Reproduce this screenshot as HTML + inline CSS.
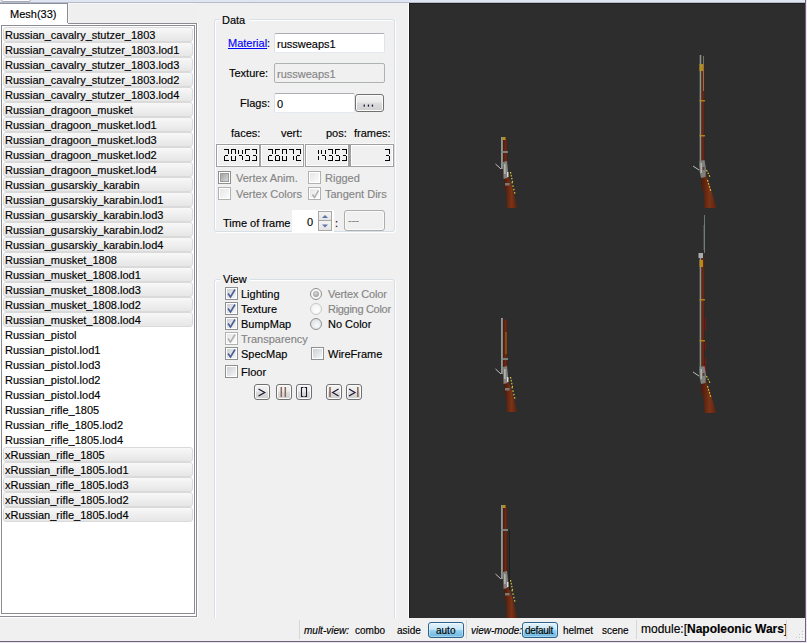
<!DOCTYPE html>
<html><head><meta charset="utf-8">
<style>
*{box-sizing:border-box;margin:0;padding:0}
html,body{width:807px;height:643px;overflow:hidden;background:#f0f0f0}
body{position:relative;font-family:"Liberation Sans",sans-serif;font-size:11px;color:#000;-webkit-text-stroke:0.15px}
.a{position:absolute}
.t{position:absolute;white-space:nowrap;line-height:15px;font-size:11px}
.it{position:absolute;left:3px;width:190px;height:15px;border:1px solid #dadada;border-radius:3px;background:linear-gradient(#f8f8f8,#e6e6e6)}
.lt{position:absolute;left:5px;white-space:nowrap;line-height:15px}
.gb{position:absolute;border:1px solid #d5dfe5;border-radius:3px;box-shadow:inset 1px 1px 0 #fff, 1px 1px 0 #fff}
.tb{position:absolute;background:#fff;border:1px solid #abadb3;border-color:#abadb3 #e2e3ea #e3e9ef #dbdfe6;border-radius:2px}
.lcd{position:absolute;top:144px;height:23px;border:1px solid #a0a0a0;box-shadow:inset 1px 1px 0 #fff,inset -1px -1px 0 #fff;background:#f0f0f0}
.cb{position:absolute;width:13px;height:13px;border:1px solid #8e8f8f;background:#fff}
.cb::after{content:"";position:absolute;left:1px;top:1px;width:9px;height:9px;background:linear-gradient(135deg,#cbcfd5,#f6f6f6)}
.cb.d{border-color:#b1b1b1}
.cb.d::after{background:linear-gradient(135deg,#e6e6e6,#fbfbfb)}
.ck svg{position:absolute;left:1px;top:1px;z-index:2}
.rb{position:absolute;width:12px;height:12px;border-radius:50%;border:1px solid #8e8f8f;background:radial-gradient(circle at 60% 65%,#f8f9fb,#d4d8de)}
.rb.d{border-color:#c8c8c8;background:radial-gradient(circle at 60% 65%,#fff,#ececec)}
.gray{color:#858585}
.pb{position:absolute;top:384px;width:16px;height:16px;border:1px solid #707070;border-radius:3px;background:linear-gradient(#f2f2f2 0,#ebebeb 45%,#dddddd 50%,#cfcfcf 100%);box-shadow:inset 0 0 0 1px #fcfcfc}
.sb{position:absolute;top:622px;height:16px;border:1px solid #2c628b;border-radius:3px;background:linear-gradient(#e5f4fc 0,#c4e5f6 48%,#98d1ef 52%,#6db6df 100%);box-shadow:inset 0 0 0 1px rgba(255,255,255,.35)}
.sep{position:absolute;top:620px;width:1px;height:19px;background:#d7d7d7}
</style></head><body>

<!-- top strip -->
<div class="a" style="left:0;top:0;width:807px;height:3px;background:linear-gradient(#dde3f1 0,#e1e7f5 66%,#b5bbc8 66%)"></div>
<div class="a" style="left:1px;top:-2px;width:30px;height:4px;background:#fbfbfd;border:1px solid #a8acb8;border-radius:2px"></div>
<div class="a" style="left:0;top:3px;width:68px;height:1px;background:#8a8f9b"></div>
<div class="a" style="left:805px;top:0;width:1px;height:642px;background:#6c6478"></div>
<div class="a" style="left:806px;top:0;width:1px;height:643px;background:#ede6f2"></div>
<div class="a" style="left:0;top:641px;width:806px;height:1px;background:#6c6478"></div>
<div class="a" style="left:0;top:642px;width:807px;height:1px;background:#e8e2f0"></div>

<!-- tab -->
<div class="a" style="left:0;top:4px;width:67px;height:20px;background:#fff"></div>
<div class="a" style="left:67px;top:4px;width:1px;height:20px;background:#898c95"></div>
<div class="a" style="left:68px;top:23px;width:129px;height:1px;background:#898c95"></div>
<div class="a" style="left:68px;top:3px;width:129px;height:20px;background:#efefef;box-shadow:inset 1px 1px 0 #f6f6f4"></div>
<div class="t" style="left:10px;top:7px">Mesh(33)</div>
<!-- pane -->
<div class="a" style="left:-1px;top:23px;width:198px;height:594px;border:1px solid #898c95;border-top:none;background:#fff"></div>
<div class="a" style="left:68px;top:23px;width:129px;height:1px;background:#898c95"></div>
<div class="a" style="left:197px;top:23px;width:1px;height:595px;background:#fff"></div>
<div class="a" style="left:0;top:617px;width:198px;height:1px;background:#fff"></div>
<!-- listbox -->
<div class="a" style="left:1px;top:25px;width:194px;height:589px;border:1px solid #898c95;background:#fff"></div>

<div class="it" style="top:27px"></div>
<div class="lt" style="top:28px">Russian_cavalry_stutzer_1803</div>
<div class="it" style="top:42px"></div>
<div class="lt" style="top:43px">Russian_cavalry_stutzer_1803.lod1</div>
<div class="it" style="top:57px"></div>
<div class="lt" style="top:58px">Russian_cavalry_stutzer_1803.lod3</div>
<div class="it" style="top:72px"></div>
<div class="lt" style="top:73px">Russian_cavalry_stutzer_1803.lod2</div>
<div class="it" style="top:87px"></div>
<div class="lt" style="top:88px">Russian_cavalry_stutzer_1803.lod4</div>
<div class="it" style="top:102px"></div>
<div class="lt" style="top:103px">Russian_dragoon_musket</div>
<div class="it" style="top:117px"></div>
<div class="lt" style="top:118px">Russian_dragoon_musket.lod1</div>
<div class="it" style="top:132px"></div>
<div class="lt" style="top:133px">Russian_dragoon_musket.lod3</div>
<div class="it" style="top:147px"></div>
<div class="lt" style="top:148px">Russian_dragoon_musket.lod2</div>
<div class="it" style="top:162px"></div>
<div class="lt" style="top:163px">Russian_dragoon_musket.lod4</div>
<div class="it" style="top:177px"></div>
<div class="lt" style="top:178px">Russian_gusarskiy_karabin</div>
<div class="it" style="top:192px"></div>
<div class="lt" style="top:193px">Russian_gusarskiy_karabin.lod1</div>
<div class="it" style="top:207px"></div>
<div class="lt" style="top:208px">Russian_gusarskiy_karabin.lod3</div>
<div class="it" style="top:222px"></div>
<div class="lt" style="top:223px">Russian_gusarskiy_karabin.lod2</div>
<div class="it" style="top:237px"></div>
<div class="lt" style="top:238px">Russian_gusarskiy_karabin.lod4</div>
<div class="it" style="top:252px"></div>
<div class="lt" style="top:253px">Russian_musket_1808</div>
<div class="it" style="top:267px"></div>
<div class="lt" style="top:268px">Russian_musket_1808.lod1</div>
<div class="it" style="top:282px"></div>
<div class="lt" style="top:283px">Russian_musket_1808.lod3</div>
<div class="it" style="top:297px"></div>
<div class="lt" style="top:298px">Russian_musket_1808.lod2</div>
<div class="it" style="top:312px"></div>
<div class="lt" style="top:313px">Russian_musket_1808.lod4</div>
<div class="lt" style="top:328px">Russian_pistol</div>
<div class="lt" style="top:343px">Russian_pistol.lod1</div>
<div class="lt" style="top:358px">Russian_pistol.lod3</div>
<div class="lt" style="top:373px">Russian_pistol.lod2</div>
<div class="lt" style="top:388px">Russian_pistol.lod4</div>
<div class="lt" style="top:403px">Russian_rifle_1805</div>
<div class="lt" style="top:418px">Russian_rifle_1805.lod2</div>
<div class="lt" style="top:433px">Russian_rifle_1805.lod4</div>
<div class="it" style="top:447px"></div>
<div class="lt" style="top:448px">xRussian_rifle_1805</div>
<div class="it" style="top:462px"></div>
<div class="lt" style="top:463px">xRussian_rifle_1805.lod1</div>
<div class="it" style="top:477px"></div>
<div class="lt" style="top:478px">xRussian_rifle_1805.lod3</div>
<div class="it" style="top:492px"></div>
<div class="lt" style="top:493px">xRussian_rifle_1805.lod2</div>
<div class="it" style="top:507px"></div>
<div class="lt" style="top:508px">xRussian_rifle_1805.lod4</div>

<!-- right panel group boxes -->
<div class="gb" style="left:214px;top:19px;width:181px;height:213px"></div>
<div class="a" style="left:220px;top:14px;width:30px;height:12px;background:#f0f0f0"></div>
<div class="t" style="left:222px;top:13px">Data</div>

<div class="t" style="left:228px;top:36px;color:#0000ff;text-decoration:underline">Material</div>
<div class="t" style="left:267px;top:36px">:</div>
<div class="tb" style="left:274px;top:33px;width:111px;height:20px"></div>
<div class="t" style="left:277px;top:37px">russweaps1</div>

<div class="t" style="left:229px;top:66px">Texture:</div>
<div class="tb" style="left:274px;top:63px;width:111px;height:20px;background:#f0f0f0;border-color:#adb2b5"></div>
<div class="t gray" style="left:277px;top:67px">russweaps1</div>

<div class="t" style="left:240px;top:96px">Flags:</div>
<div class="tb" style="left:274px;top:93px;width:81px;height:20px"></div>
<div class="t" style="left:277px;top:97px">0</div>
<div class="pb" style="left:355px;top:94px;width:29px;height:18px"></div>
<svg class="a" style="left:362px;top:104px" width="14" height="4"><rect x="1.6" y="0.6" width="1.3" height="2" fill="#101030"/><rect x="5.8" y="0.6" width="1.3" height="2" fill="#101030"/><rect x="9.8" y="0.6" width="1.3" height="2" fill="#101030"/></svg>

<div class="t" style="left:231px;top:126px">faces:</div>
<div class="t" style="left:281px;top:126px">vert:</div>
<div class="t" style="left:326px;top:126px">pos:</div>
<div class="t" style="left:354px;top:126px">frames:</div>

<div class="a" style="left:216px;top:143px;width:178px;height:1px;background:#f8f8f8"></div>
<div class="lcd" style="left:216px;width:44px"></div>
<div class="lcd" style="left:260px;width:44px"></div>
<div class="lcd" style="left:305px;width:44px"></div>
<div class="lcd" style="left:349px;width:45px;border-left-width:2px"></div>
<svg class="a" style="left:0;top:0" width="807" height="643" id="lcdsvg"><rect x="224" y="149" width="5" height="1" fill="#000"/><rect x="228" y="150" width="1" height="4" fill="#000"/><rect x="224" y="160" width="5" height="1" fill="#000"/><rect x="224" y="156" width="1" height="4" fill="#000"/><rect x="225" y="155" width="3" height="1" fill="#000"/><rect x="231" y="149" width="5" height="1" fill="#000"/><rect x="235" y="150" width="1" height="4" fill="#000"/><rect x="235" y="156" width="1" height="4" fill="#000"/><rect x="231" y="160" width="5" height="1" fill="#000"/><rect x="231" y="156" width="1" height="4" fill="#000"/><rect x="231" y="150" width="1" height="4" fill="#000"/><rect x="242" y="150" width="1" height="4" fill="#000"/><rect x="242" y="156" width="1" height="4" fill="#000"/><rect x="238" y="150" width="1" height="4" fill="#000"/><rect x="239" y="155" width="3" height="1" fill="#000"/><rect x="245" y="149" width="5" height="1" fill="#000"/><rect x="249" y="156" width="1" height="4" fill="#000"/><rect x="245" y="160" width="5" height="1" fill="#000"/><rect x="245" y="150" width="1" height="4" fill="#000"/><rect x="246" y="155" width="3" height="1" fill="#000"/><rect x="252" y="149" width="5" height="1" fill="#000"/><rect x="256" y="150" width="1" height="4" fill="#000"/><rect x="256" y="156" width="1" height="4" fill="#000"/><rect x="252" y="160" width="5" height="1" fill="#000"/><rect x="253" y="155" width="3" height="1" fill="#000"/><rect x="268" y="149" width="5" height="1" fill="#000"/><rect x="272" y="150" width="1" height="4" fill="#000"/><rect x="268" y="160" width="5" height="1" fill="#000"/><rect x="268" y="156" width="1" height="4" fill="#000"/><rect x="269" y="155" width="3" height="1" fill="#000"/><rect x="275" y="149" width="5" height="1" fill="#000"/><rect x="279" y="156" width="1" height="4" fill="#000"/><rect x="275" y="160" width="5" height="1" fill="#000"/><rect x="275" y="156" width="1" height="4" fill="#000"/><rect x="275" y="150" width="1" height="4" fill="#000"/><rect x="276" y="155" width="3" height="1" fill="#000"/><rect x="282" y="149" width="5" height="1" fill="#000"/><rect x="286" y="150" width="1" height="4" fill="#000"/><rect x="286" y="156" width="1" height="4" fill="#000"/><rect x="282" y="160" width="5" height="1" fill="#000"/><rect x="282" y="156" width="1" height="4" fill="#000"/><rect x="282" y="150" width="1" height="4" fill="#000"/><rect x="289" y="149" width="5" height="1" fill="#000"/><rect x="293" y="150" width="1" height="4" fill="#000"/><rect x="293" y="156" width="1" height="4" fill="#000"/><rect x="296" y="149" width="5" height="1" fill="#000"/><rect x="300" y="150" width="1" height="4" fill="#000"/><rect x="296" y="160" width="5" height="1" fill="#000"/><rect x="296" y="156" width="1" height="4" fill="#000"/><rect x="297" y="155" width="3" height="1" fill="#000"/><rect x="318" y="150" width="1" height="4" fill="#000"/><rect x="318" y="156" width="1" height="4" fill="#000"/><rect x="325" y="150" width="1" height="4" fill="#000"/><rect x="325" y="156" width="1" height="4" fill="#000"/><rect x="321" y="150" width="1" height="4" fill="#000"/><rect x="322" y="155" width="3" height="1" fill="#000"/><rect x="328" y="149" width="5" height="1" fill="#000"/><rect x="332" y="150" width="1" height="4" fill="#000"/><rect x="332" y="156" width="1" height="4" fill="#000"/><rect x="328" y="160" width="5" height="1" fill="#000"/><rect x="329" y="155" width="3" height="1" fill="#000"/><rect x="335" y="149" width="5" height="1" fill="#000"/><rect x="339" y="156" width="1" height="4" fill="#000"/><rect x="335" y="160" width="5" height="1" fill="#000"/><rect x="335" y="150" width="1" height="4" fill="#000"/><rect x="336" y="155" width="3" height="1" fill="#000"/><rect x="342" y="149" width="5" height="1" fill="#000"/><rect x="346" y="150" width="1" height="4" fill="#000"/><rect x="346" y="156" width="1" height="4" fill="#000"/><rect x="342" y="160" width="5" height="1" fill="#000"/><rect x="343" y="155" width="3" height="1" fill="#000"/><rect x="385" y="149" width="5" height="1" fill="#000"/><rect x="389" y="150" width="1" height="4" fill="#000"/><rect x="389" y="156" width="1" height="4" fill="#000"/><rect x="385" y="160" width="5" height="1" fill="#000"/><rect x="386" y="155" width="3" height="1" fill="#000"/></svg>

<!-- data checkboxes -->
<div class="cb d" style="left:218px;top:171px;border-color:#8e8f8f"></div>
<div class="a" style="left:220px;top:173px;width:9px;height:9px;border:1px solid #9c9c9c;background:linear-gradient(135deg,#a4a4a4,#d6d6d6)"></div>
<div class="t gray" style="left:236px;top:171px">Vertex Anim.</div>
<div class="cb d" style="left:218px;top:187px"></div>
<div class="t gray" style="left:236px;top:187px">Vertex Colors</div>
<div class="cb d" style="left:308px;top:171px"></div>
<div class="t gray" style="left:325px;top:171px">Rigged</div>
<div class="cb d ck" style="left:308px;top:187px"><svg width="11" height="11"><path d="M2.5 5.5 L4.5 8.5 L8.5 1.5" fill="none" stroke="#a9a9a9" stroke-width="1.4"/></svg></div>
<div class="t gray" style="left:325px;top:187px">Tangent Dirs</div>

<div class="t" style="left:223px;top:216px">Time of frame</div>
<div class="a" style="left:292px;top:210px;width:42px;height:22px;background:#fff"></div>
<div class="t" style="left:307px;top:215px">0</div>
<div class="a" style="left:318px;top:211px;width:14px;height:10px;border:1px solid #a7a7a7;background:linear-gradient(#f4f4f4,#e4e4e4)"></div>
<div class="a" style="left:318px;top:220px;width:14px;height:11px;border:1px solid #a7a7a7;background:linear-gradient(#f4f4f4,#e4e4e4)"></div>
<svg class="a" style="left:318px;top:211px" width="14" height="20"><path d="M4 7 L7 4 L10 7Z" fill="#5d74a6"/><path d="M4 13.5 L7 16.5 L10 13.5Z" fill="#5d74a6"/></svg>
<div class="t" style="left:335px;top:216px">:</div>
<div class="a" style="left:344px;top:210px;width:41px;height:21px;border:1px solid #adadad;border-radius:3px;background:#f0f0f0;box-shadow:inset 0 0 0 1px #fafafa"></div>
<div class="t gray" style="left:348px;top:213px">---</div>

<!-- View group -->
<div class="gb" style="left:214px;top:279px;width:181px;height:360px"></div>
<div class="a" style="left:220px;top:274px;width:30px;height:12px;background:#f0f0f0"></div>
<div class="t" style="left:223px;top:272px">View</div>

<div class="cb" style="left:225px;top:287px"><svg width="11" height="11" style="position:absolute;left:0;top:0;z-index:3"><path d="M2 5.5 L4.5 9 L9 1.5" fill="none" stroke="#4a5f97" stroke-width="1.6"/></svg></div>
<div class="t" style="left:241px;top:287px">Lighting</div>
<div class="cb" style="left:225px;top:302px"><svg width="11" height="11" style="position:absolute;left:0;top:0;z-index:3"><path d="M2 5.5 L4.5 9 L9 1.5" fill="none" stroke="#4a5f97" stroke-width="1.6"/></svg></div>
<div class="t" style="left:241px;top:302px">Texture</div>
<div class="cb" style="left:225px;top:317px"><svg width="11" height="11" style="position:absolute;left:0;top:0;z-index:3"><path d="M2 5.5 L4.5 9 L9 1.5" fill="none" stroke="#4a5f97" stroke-width="1.6"/></svg></div>
<div class="t" style="left:241px;top:317px">BumpMap</div>
<div class="cb d" style="left:225px;top:332px"><svg width="11" height="11" style="position:absolute;left:0;top:0;z-index:3"><path d="M2 5.5 L4.5 9 L9 1.5" fill="none" stroke="#b0b0b0" stroke-width="1.6"/></svg></div>
<div class="t gray" style="left:241px;top:332px">Transparency</div>
<div class="cb" style="left:225px;top:347px"><svg width="11" height="11" style="position:absolute;left:0;top:0;z-index:3"><path d="M2 5.5 L4.5 9 L9 1.5" fill="none" stroke="#4a5f97" stroke-width="1.6"/></svg></div>
<div class="t" style="left:241px;top:347px">SpecMap</div>
<div class="cb" style="left:225px;top:365px"></div>
<div class="t" style="left:241px;top:365px">Floor</div>
<div class="cb" style="left:311px;top:347px"></div>
<div class="t" style="left:328px;top:347px">WireFrame</div>
<div class="rb" style="left:310px;top:288px;background:#f6f6f6"><div style="position:absolute;left:2px;top:2px;width:6px;height:6px;border-radius:50%;background:radial-gradient(circle at 45% 40%,#d8d8d8,#8a8a8a)"></div></div>
<div class="t gray" style="left:328px;top:287px;letter-spacing:-0.15px">Vertex Color</div>
<div class="rb d" style="left:310px;top:303px"></div>
<div class="t gray" style="left:328px;top:302px;letter-spacing:-0.3px">Rigging Color</div>
<div class="rb" style="left:310px;top:318px"></div>
<div class="t" style="left:328px;top:317px;letter-spacing:0px">No Color</div>
<div class="pb" style="left:254px"></div>
<div class="pb" style="left:276px"></div>
<div class="pb" style="left:296px"></div>
<div class="pb" style="left:326px"></div>
<div class="pb" style="left:346px"></div>
<svg class="a" style="left:0;top:0;z-index:4" width="807" height="643" fill="none" stroke-width="1.1"><polyline points="258.5,389 264.8,392.5 258.5,396" stroke="#1a1030"/><line x1="281.3" y1="387" x2="281.3" y2="397" stroke="#8a6a58" stroke-width="1.5"/><line x1="285.3" y1="387" x2="285.3" y2="397" stroke="#8a6a58" stroke-width="1.5"/><path d="M303.5 387.5 H301.5 V396.5 H303.5 M304.5 387.5 H306.5 V396.5 H304.5" stroke="#1a1a2a"/><line x1="330" y1="387" x2="330" y2="397" stroke="#8a6a58" stroke-width="1.6"/><polyline points="338.6,389 332.6,392.5 338.6,396" stroke="#1a1030"/><polyline points="349,389 355,392.5 349,396" stroke="#1a1030"/><line x1="357.8" y1="387" x2="357.8" y2="397" stroke="#8a6a58" stroke-width="1.6"/></svg>

<!-- viewport -->
<div class="a" style="left:408px;top:3px;width:1px;height:615px;background:#fff"></div>
<div class="a" style="left:409px;top:3px;width:396px;height:615px;background:#2d2d2d;box-shadow:inset 1px 1px 0 #1e1e1c"></div>
<svg class="a" style="left:409px;top:4px" width="396" height="614" id="rifles"><g transform="translate(-409,-4)"><defs><linearGradient id="st" x1="0" y1="0" x2="1" y2="0"><stop offset="0" stop-color="#4e1a0a"/><stop offset="0.55" stop-color="#7a3418"/><stop offset="1" stop-color="#5a2010"/></linearGradient>
<linearGradient id="fe" x1="0" y1="0" x2="1" y2="0"><stop offset="0" stop-color="#4a160a"/><stop offset="0.6" stop-color="#6e2a14"/><stop offset="1" stop-color="#50190b"/></linearGradient></defs><polygon points="700.8,66 704.3,66 704.6,179 700.8,179" fill="url(#fe)" opacity="1"/><rect x="699.8" y="55" width="1.5" height="112" fill="#7b8784" opacity="1"/><rect x="699.8" y="55" width="0.7" height="112" fill="#a9b4b1" opacity="0.6"/><rect x="699.5" y="100" width="5.5" height="1.5" fill="#b8901c" opacity="0.85"/><rect x="699.5" y="135" width="5.5" height="1.5" fill="#b8901c" opacity="0.85"/><rect x="699.5" y="64" width="3.5" height="7" fill="#b8901c" opacity="0.95"/><polygon points="701.2,178 705.5,173 710,186 716.5,208 704.5,208 704,194 701.5,186" fill="url(#st)" opacity="1"/><polygon points="699.5,161 704.5,160 706,169 705.5,177 701,178 699.5,171" fill="#858b88" opacity="0.9"/><rect x="700.5" y="163" width="1.5" height="10" fill="#b8c0bd" opacity="0.8"/><rect x="702.5" y="167" width="2" height="3" fill="#5a3020" opacity="0.8"/><line x1="693" y1="166" x2="699" y2="170" stroke="#cfcfcf" stroke-width="0.9" opacity="1"/><line x1="706.5" y1="170" x2="710" y2="177" stroke="#e8c832" stroke-width="1.1" opacity="1" stroke-dasharray="1.6 1.4"/><line x1="707.5" y1="180" x2="711" y2="192" stroke="#e8c832" stroke-width="1.1" opacity="1" stroke-dasharray="1.6 1.6"/><line x1="703.5" y1="56" x2="703.5" y2="91" stroke="#a09468" stroke-width="0.7" opacity="1"/><line x1="704.5" y1="215" x2="704.5" y2="253" stroke="#6a7670" stroke-width="1" opacity="1"/><line x1="703.9" y1="225" x2="703.9" y2="250" stroke="#a8b098" stroke-width="0.6" opacity="0.6"/><rect x="698.5" y="253" width="4.5" height="5" fill="#a8acaa" opacity="1"/><polygon points="700.8,258 704.3,258 704.6,385 700.8,385" fill="url(#fe)" opacity="1"/><rect x="699.8" y="258" width="1.5" height="115" fill="#7b8784" opacity="1"/><rect x="699.8" y="258" width="0.7" height="115" fill="#a9b4b1" opacity="0.6"/><rect x="699.5" y="299" width="5.5" height="1.5" fill="#b8901c" opacity="0.85"/><rect x="699.5" y="340" width="5.5" height="1.5" fill="#b8901c" opacity="0.85"/><rect x="699.5" y="260" width="3.5" height="7" fill="#b8901c" opacity="0.95"/><rect x="705" y="318" width="0.9" height="12" fill="#8c1414" opacity="1"/><rect x="705" y="342" width="0.9" height="8" fill="#8c1414" opacity="1"/><rect x="705" y="358" width="0.9" height="14" fill="#8c1414" opacity="1"/><polygon points="701.2,384 705.5,379 710,392 716.5,413 704.5,413 704,400 701.5,392" fill="url(#st)" opacity="1"/><polygon points="699.5,367 704.5,366 706,375 705.5,383 701,384 699.5,377" fill="#858b88" opacity="0.9"/><rect x="700.5" y="369" width="1.5" height="10" fill="#b8c0bd" opacity="0.8"/><rect x="702.5" y="373" width="2" height="3" fill="#5a3020" opacity="0.8"/><line x1="693" y1="372" x2="699" y2="376" stroke="#cfcfcf" stroke-width="0.9" opacity="1"/><line x1="706.5" y1="376" x2="710" y2="383" stroke="#e8c832" stroke-width="1.1" opacity="1" stroke-dasharray="1.6 1.4"/><line x1="707.5" y1="386" x2="711" y2="398" stroke="#e8c832" stroke-width="1.1" opacity="1" stroke-dasharray="1.6 1.6"/><polygon points="502.8,138 507,139 507.5,179 503,179" fill="url(#fe)" opacity="1"/><rect x="501.2" y="137" width="1.8" height="32" fill="#7b8784" opacity="1"/><rect x="501.2" y="137" width="0.9" height="32" fill="#a9b4b1" opacity="0.7"/><rect x="502.5" y="137" width="3" height="3" fill="#b8901c" opacity="1"/><rect x="501" y="151" width="7" height="2" fill="#7f8a88" opacity="0.9"/><polygon points="504.5,179 508.5,176 512.5,188 517,208 507,208 506.5,194 504.5,186" fill="url(#st)" opacity="1"/><polygon points="503,162 507,161 508,170 507.5,178 503.5,179" fill="#858b88" opacity="0.9"/><rect x="504" y="164" width="1.6" height="10" fill="#b8c0bd" opacity="0.8"/><line x1="495.5" y1="164" x2="501" y2="169" stroke="#cfcfcf" stroke-width="0.9" opacity="1"/><rect x="507" y="172" width="1.5" height="5" fill="#e8e8e8" opacity="0.9"/><line x1="510.5" y1="172" x2="512.5" y2="182" stroke="#e8c832" stroke-width="1.1" opacity="1" stroke-dasharray="1.6 1.4"/><line x1="512" y1="182" x2="515" y2="194" stroke="#e8c832" stroke-width="1.2" opacity="1" stroke-dasharray="1.5 2"/><rect x="505" y="183" width="4.5" height="2.5" fill="#7f8a88" opacity="0.85"/><polygon points="502.8,319 507,320 507.5,384 503,384" fill="url(#fe)" opacity="1"/><rect x="501.2" y="318" width="1.8" height="56" fill="#7b8784" opacity="1"/><rect x="501.2" y="318" width="0.9" height="56" fill="#a9b4b1" opacity="0.7"/><rect x="501" y="358" width="7" height="2" fill="#7f8a88" opacity="0.9"/><polygon points="504.5,384 508.5,381 512.5,393 517,412 507,412 506.5,399 504.5,391" fill="url(#st)" opacity="1"/><polygon points="503,367 507,366 508,375 507.5,383 503.5,384" fill="#858b88" opacity="0.9"/><rect x="504" y="369" width="1.6" height="10" fill="#b8c0bd" opacity="0.8"/><line x1="495.5" y1="369" x2="501" y2="374" stroke="#cfcfcf" stroke-width="0.9" opacity="1"/><rect x="507" y="377" width="1.5" height="5" fill="#e8e8e8" opacity="0.9"/><line x1="510.5" y1="377" x2="512.5" y2="387" stroke="#e8c832" stroke-width="1.1" opacity="1" stroke-dasharray="1.6 1.4"/><line x1="512" y1="387" x2="515" y2="399" stroke="#e8c832" stroke-width="1.2" opacity="1" stroke-dasharray="1.5 2"/><rect x="505" y="388" width="4.5" height="2.5" fill="#7f8a88" opacity="0.85"/><polygon points="502.8,506 507,507 507.5,589 503,589" fill="url(#fe)" opacity="1"/><rect x="501.2" y="505" width="1.8" height="74" fill="#7b8784" opacity="1"/><rect x="501.2" y="505" width="0.9" height="74" fill="#a9b4b1" opacity="0.7"/><rect x="502.5" y="505" width="3" height="3" fill="#b8901c" opacity="1"/><rect x="501" y="529" width="7" height="2" fill="#7f8a88" opacity="0.9"/><polygon points="504.5,589 508.5,586 512.5,598 517,618 507,618 506.5,604 504.5,596" fill="url(#st)" opacity="1"/><polygon points="503,572 507,571 508,580 507.5,588 503.5,589" fill="#858b88" opacity="0.9"/><rect x="504" y="574" width="1.6" height="10" fill="#b8c0bd" opacity="0.8"/><line x1="495.5" y1="574" x2="501" y2="579" stroke="#cfcfcf" stroke-width="0.9" opacity="1"/><rect x="507" y="582" width="1.5" height="5" fill="#e8e8e8" opacity="0.9"/><line x1="510.5" y1="580" x2="512.5" y2="590" stroke="#e8c832" stroke-width="1.1" opacity="1" stroke-dasharray="1.6 1.4"/><line x1="512" y1="590" x2="515" y2="602" stroke="#e8c832" stroke-width="1.2" opacity="1" stroke-dasharray="1.5 2"/><rect x="505" y="593" width="4.5" height="2.5" fill="#7f8a88" opacity="0.85"/><line x1="506" y1="332" x2="506" y2="354" stroke="#b8901c" stroke-width="0.7" opacity="1"/><line x1="509.5" y1="530" x2="509.5" y2="590" stroke="#1c1c1c" stroke-width="0.9" opacity="1"/></g></svg>

<!-- status bar -->
<div class="a" style="left:0;top:618px;width:805px;height:23px;background:#f0f0f0"></div>
<div class="sep" style="left:299px"></div>
<div class="t" style="left:304px;top:623px;font-size:10px"><i>mult-view:</i></div>
<div class="t" style="left:355px;top:623px;font-size:10px">combo</div>
<div class="t" style="left:397px;top:623px;font-size:10px">aside</div>
<div class="sb" style="left:428px;width:36px"></div>
<div class="t" style="left:436px;top:623px;font-size:10px">auto</div>
<div class="sep" style="left:466px"></div>
<div class="t" style="left:471px;top:623px;font-size:10px"><i>view-mode:</i></div>
<div class="sb" style="left:522px;width:36px"></div>
<div class="t" style="left:525px;top:623px;font-size:10px;letter-spacing:-0.3px">default</div>
<div class="t" style="left:563px;top:623px;font-size:10px">helmet</div>
<div class="t" style="left:602px;top:623px;font-size:10px">scene</div>
<div class="sep" style="left:636px"></div>
<div class="t" style="left:641px;top:622px;font-size:12px">module:[<b>Napoleonic Wars</b>]</div>
<div class="sep" style="left:786px"></div>
<svg class="a" style="left:793px;top:629px" width="11" height="11"><g fill="#c4c4c4"><rect x="9" y="2" width="1" height="1"/><rect x="6" y="5" width="1" height="1"/><rect x="9" y="5" width="1" height="1"/><rect x="3" y="8" width="1" height="1"/><rect x="6" y="8" width="1" height="1"/><rect x="9" y="8" width="1" height="1"/></g><g fill="#fff"><rect x="10" y="3" width="1" height="1"/><rect x="7" y="6" width="1" height="1"/><rect x="10" y="6" width="1" height="1"/><rect x="4" y="9" width="1" height="1"/><rect x="7" y="9" width="1" height="1"/><rect x="10" y="9" width="1" height="1"/></g></svg>

</body></html>
